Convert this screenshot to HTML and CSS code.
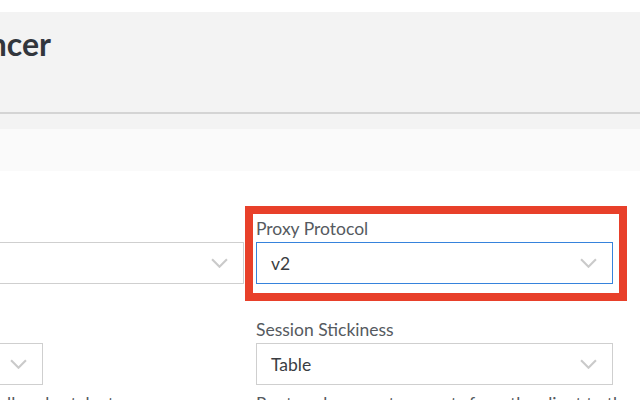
FILE: index.html
```html
<!DOCTYPE html>
<html>
<head>
<meta charset="utf-8">
<link rel="stylesheet" href="styles.css">
</head>
<body>
<header class="page-head">
  <div class="title-bar">
    <div class="title-clip"><h1 class="title">Create NodeBalancer</h1></div>
  </div>
</header>
<div class="tabs-bar"></div>
<main class="form">
  <div class="field">
    <label class="label">Protocol</label>
    <div class="select"><span class="value">TCP</span><svg class="chev" viewBox="0 0 16 9"><path d="M1 1l7 7 7-7"/></svg></div>
  </div>
  <div class="field highlighted">
    <label class="label">Proxy Protocol</label>
    <div class="select focused"><span class="value">v2</span><svg class="chev" viewBox="0 0 16 9"><path d="M1 1l7 7 7-7"/></svg></div>
    <div class="annot"></div>
  </div>
  <div class="field">
    <label class="label">Algorithm</label>
    <div class="select small"><span class="value"></span><svg class="chev" viewBox="0 0 16 9"><path d="M1 1l7 7 7-7"/></svg></div>
    <p class="help wrap">Roundrobin; all nodes take turns.</p>
  </div>
  <div class="field">
    <label class="label">Session Stickiness</label>
    <div class="select"><span class="value">Table</span><svg class="chev" viewBox="0 0 16 9"><path d="M1 1l7 7 7-7"/></svg></div>
    <p class="help">Route subsequent requests from the client to the same backend.</p>
  </div>
</main>
</body>
</html>
```
FILE: styles.css
```css
* { box-sizing: border-box; }
html, body { margin: 0; padding: 0; background: #fff; overflow: hidden; }
body { font-family: Lato, "Open Sans", sans-serif; color: #32363c; }

.page-head {
  margin-top: 12px;
  background: #f3f3f3;
  padding-bottom: 15px;
}
.title-bar {
  height: 102px;
  border-bottom: 2px solid #d4d4d4;
}
.title-clip {
  width: 51px;
  display: flex;
  justify-content: flex-end;
  white-space: nowrap;
  padding-top: 12px;
}
.title {
  margin: 0;
  font-size: 32px;
  line-height: 40px;
  font-weight: 700;
  color: #32363c;
  flex: none;
}
.tabs-bar {
  height: 42px;
  background: #fafafa;
}

.form {
  display: grid;
  grid-template-columns: 344px 357px;
  column-gap: 12px;
  row-gap: 36px;
  margin-left: -100px;
  padding-top: 48px;
}
.field { position: relative; display: flex; flex-direction: column; }
.label {
  font-size: 17.5px;
  line-height: 20px;
  color: #555a60;
  margin-bottom: 3px;
}
.select {
  height: 42px;
  border: 1px solid #cfcfcf;
  display: flex;
  align-items: center;
  justify-content: space-between;
  padding: 0 15px 0 14px;
  font-size: 17.5px;
  color: #3a3d42;
}
.select.small { width: 143px; }
.select.focused { border-color: #3683dc; }
.chev {
  width: 17px;
  height: 10px;
  fill: none;
  stroke: #cacaca;
  stroke-width: 2;
}
.help {
  margin: 9px 0 0;
  font-size: 17.5px;
  line-height: 20px;
  color: #555a60;
  white-space: nowrap;
}
.help.wrap { white-space: normal; }
.annot {
  position: absolute;
  left: -11px;
  top: -13px;
  right: -14px;
  bottom: -17px;
  border: 8px solid #e8402a;
  pointer-events: none;
}
```
